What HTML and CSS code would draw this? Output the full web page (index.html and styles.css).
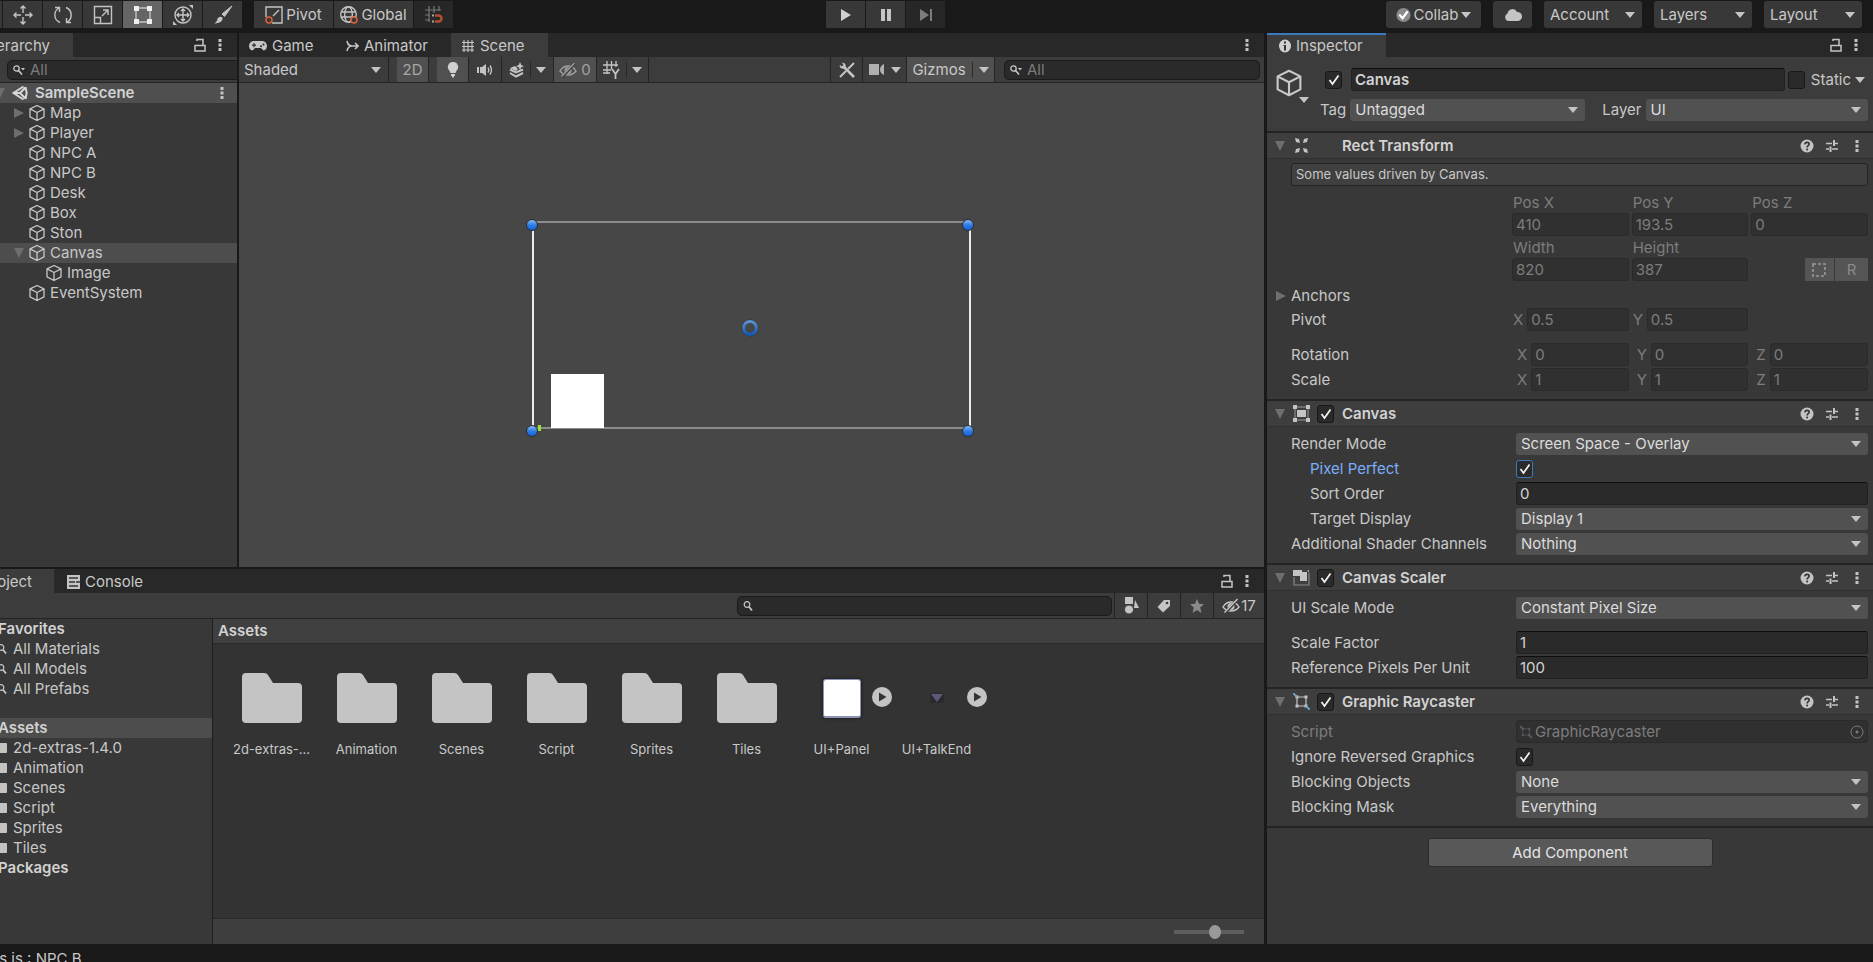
FILE: index.html
```html
<!DOCTYPE html>
<html lang="en">
<head>
    <meta charset="UTF-8">
    <meta name="viewport" content="width=device-width, initial-scale=1.0">
    <title>SampleScene - Editor</title>
    <link rel="stylesheet" href="styles.css">
</head>
<body>
    <!-- shared icons -->
    <svg class="sprite" aria-hidden="true">
        <symbol id="i-cube" viewBox="0 0 16 17"><path d="M8 1l7 3.400v8L8 16l-7-3.600v-8zM1 4.400L8 8l7-3.600M8 8v8" fill="none" stroke="currentColor" stroke-width="1.300" stroke-linejoin="round"/></symbol>
        <symbol id="i-right" viewBox="0 0 10 12"><path d="M0 1l10 5-10 5z" fill="currentColor"/></symbol>
        <symbol id="i-down" viewBox="0 0 10 10"><path d="M0 0h10L5 10z" fill="currentColor"/></symbol>
        <symbol id="i-caret" viewBox="0 0 10 6"><path d="M0 0h10L5 6z" fill="currentColor"/></symbol>
        <symbol id="i-dots" viewBox="0 0 4 14"><path d="M.5 1h3v3h-3zM.5 5.500h3v3h-3zM.5 10h3v3h-3z" fill="currentColor"/></symbol>
        <symbol id="i-lock" viewBox="0 0 12 14"><path d="M1 7.500h10V13H1zM3 3V1.500h6v6" fill="none" stroke="currentColor" stroke-width="1.500"/></symbol>
        <symbol id="i-search" viewBox="0 0 13 10"><circle cx="3.500" cy="3.500" r="2.700" fill="none" stroke="currentColor" stroke-width="1.300"/><path d="M5.500 5.500l3.500 4" stroke="currentColor" stroke-width="1.600"/><path d="M8 3h4l-2 2.500z" fill="currentColor"/></symbol>
        <symbol id="i-find" viewBox="0 0 10 12"><circle cx="4" cy="4.500" r="2.800" fill="none" stroke="currentColor" stroke-width="1.200"/><path d="M6 6.800l3 3.700" stroke="currentColor" stroke-width="1.800"/></symbol>
        <symbol id="i-folder" viewBox="0 0 60 50"><path d="M4 0h18q3 0 4 2l5 8h25q4 0 4 4v32q0 4-4 4H4q-4 0-4-4V4q0-4 4-4z" fill="currentColor"/></symbol>
        <symbol id="i-eye" viewBox="0 0 18 16"><path d="M1 9q3-5 8-5t8 5q-3 4-8 4T1 9z" fill="none" stroke="currentColor" stroke-width="1.400"/><circle cx="9" cy="8.500" r="3.500" fill="currentColor"/><path d="M3 15L16 1" stroke="#3c3c3c" stroke-width="3"/><path d="M2.500 14.500L15.500 1" stroke="currentColor" stroke-width="1.400"/></symbol>
        <symbol id="i-help" viewBox="0 0 14 14"><circle cx="7" cy="7" r="6.500" fill="currentColor"/><path d="M4.900 5.400q.2-2 2.200-2t2.100 1.700q0 1-1.200 1.700-.9.600-.9 1.700" fill="none" stroke="#333" stroke-width="1.600"/><circle cx="7.100" cy="10.500" r="1" fill="#333"/></symbol>
        <symbol id="i-preset" viewBox="0 0 14 14"><path d="M1 4.500h6M10 4.500h3M1 10h3M7 10h6" stroke="currentColor" stroke-width="1.300" fill="none"/><path d="M9 1v6M5.500 7.500V13" stroke="currentColor" stroke-width="2"/></symbol>
        <symbol id="i-play" viewBox="0 0 20 20"><circle cx="10" cy="10" r="10" fill="#c4c4c4"/><path d="M7 5.500l7.500 4.500L7 14.500z" fill="#333"/></symbol>
        <symbol id="i-grid" viewBox="0 0 14 14"><path d="M3 1v12M7 1v12M11 1v12M1 3.500h12M1 7.500h12M1 11h12" stroke="currentColor" stroke-width="1.100"/></symbol>
        <symbol id="i-ray" viewBox="0 0 17 17"><path d="M4 4h9v9H4z" fill="none" stroke="currentColor" stroke-width="1.200"/><path d="M2.500 2.500h3v3h-3zM11.500 2.500h3v3h-3zM2.500 11.500h3v3h-3zM11.500 11.500h3v3h-3z" fill="currentColor"/><path d="M0 0l4 4M13 13l4 4" stroke="#6ea8cc" stroke-width="1.800"/></symbol>
    </svg>

    <header class="topbar">
        <div class="group tools">
            <button class="tool edge" aria-label="Hand"></button>
            <button class="tool" aria-label="Move"><svg width="20" height="20" viewBox="0 0 20 20"><path d="M10 1v7M10 12v7M1 10h7M12 10h7M7.500 3.500L10 1l2.500 2.500M7.500 16.500L10 19l2.500-2.500M3.500 7.500L1 10l2.500 2.500M16.500 7.500L19 10l-2.500 2.500" class="line"/></svg></button>
            <button class="tool" aria-label="Rotate"><svg width="20" height="20" viewBox="0 0 20 20"><path d="M7 17.500A8 8 0 0 1 6 3M13 2.500A8 8 0 0 1 14 17M2 2.500h4.500V7M18 17.500h-4.500V13" class="line"/></svg></button>
            <button class="tool" aria-label="Scale"><svg width="20" height="20" viewBox="0 0 20 20"><path d="M1.500 1.500h17v17h-17zM1.500 12.500h6v6M9 11l6-6M10 5h5v5" class="line"/></svg></button>
            <button class="tool active" aria-label="Rect"><svg width="20" height="20" viewBox="0 0 20 20"><path d="M3 3h14v14H3z" class="line"/><path d="M1 1h5v5H1zM14 1h5v5h-5zM1 14h5v5H1zM14 14h5v5h-5z" fill="#eee"/></svg></button>
            <button class="tool" aria-label="Transform"><svg width="20" height="20" viewBox="0 0 20 20"><circle cx="10" cy="10" r="8" class="line"/><path d="M10 4v12M4 10h12M8 6l2-2 2 2M8 14l2 2 2-2M6 8l-2 2 2 2M14 8l2 2-2 2" class="line"/><path d="M16 0h4v4zM0 16v4h4z" fill="#c4c4c4"/></svg></button>
            <button class="tool" aria-label="Custom tool"><svg width="20" height="20" viewBox="0 0 20 20"><path d="M19 1L9 9l2.500 2.500z" fill="#c4c4c4" stroke="#c4c4c4" stroke-linejoin="round"/><path d="M9.500 12.500q1 5.500-8.500 6 3.500-2 3.500-5 2-3 5-1z" fill="#c4c4c4"/></svg></button>
        </div>
        <div class="group">
            <button class="tool wide"><svg width="18" height="18" viewBox="0 0 18 18"><path d="M7 17H17V1H1v10M8 10l6-6" class="line"/><circle cx="4" cy="14" r="3" fill="none" stroke="#d9623b" stroke-width="1.500"/></svg>Pivot</button>
            <button class="tool wide"><svg width="18" height="18" viewBox="0 0 18 18"><circle cx="8.500" cy="8.500" r="7.800" class="line"/><ellipse cx="8.500" cy="8.500" rx="3.800" ry="7.800" class="line"/><path d="M1 6h15M1 11h15" class="line"/><circle cx="14" cy="14" r="3" fill="#383838" stroke="#d9623b" stroke-width="1.500"/></svg>Global</button>
            <button class="tool off" aria-label="Snap"><svg width="20" height="20" viewBox="0 0 20 20"><path d="M5 1v16M10 1v7M15 1v5M1 5h16M1 10h5M1 15h5" stroke="#777" stroke-width="1.200" fill="none"/><path d="M11 10.500h3.500a3 3 0 0 1 0 6H11" fill="none" stroke="#b0502f" stroke-width="2.400"/><path d="M8 9.500h2v2H8zM8 15.500h2v2H8z" fill="#aaa"/></svg></button>
        </div>
        <span class="space-before"></span>
        <div class="group">
            <button class="tool" aria-label="Play"><svg width="12" height="14" viewBox="0 0 12 14"><path d="M1 1l10 6-10 6z" fill="#d0d0d0"/></svg></button>
            <button class="tool" aria-label="Pause"><svg width="12" height="14" viewBox="0 0 12 14"><path d="M1 1h4v12H1zM7 1h4v12H7z" fill="#c4c4c4"/></svg></button>
            <button class="tool off" aria-label="Step"><svg width="14" height="14" viewBox="0 0 14 14"><path d="M1 1l9 6-9 6zM11 1h2v12h-2z" fill="#7d7d7d"/></svg></button>
        </div>
        <span class="space-after"></span>
        <div class="account">
            <button class="tool collab"><svg width="15" height="16" viewBox="0 0 16 16"><circle cx="8" cy="8" r="7.500" fill="#8a8a8a"/><path d="M3.500 7.500l3.500 4L12.500 4" fill="none" stroke="#fff" stroke-width="2.400"/></svg>Collab<svg class="caret"><use href="#i-caret"/></svg></button>
            <button class="tool" aria-label="Services"><svg width="18" height="13" viewBox="0 0 18 13"><path d="M4 13a4 4 0 0 1-.5-7.500A5 5 0 0 1 13 4a4.500 4.500 0 0 1 1 9z" fill="#c4c4c4"/></svg></button>
            <select aria-label="Account"><option>Account</option></select>
            <select aria-label="Layers"><option>Layers</option></select>
            <select aria-label="Layout"><option>Layout</option></select>
        </div>
    </header>

    <main class="editor">
        <section class="hierarchy panel">
            <div class="tabs">
                <div class="tab current clipped">Hierarchy</div>
                <span class="tab-actions"><svg class="lock"><use href="#i-lock"/></svg><svg class="dots"><use href="#i-dots"/></svg></span>
            </div>
            <div class="bar search-row">
                <label class="search"><svg class="glass"><use href="#i-search"/></svg><input type="text" placeholder="All" aria-label="Search hierarchy"></label>
            </div>
            <ul class="tree">
                <li class="scene-row"><svg class="down"><use href="#i-down"/></svg><svg width="16" height="16" viewBox="0 0 16 16"><path d="M11.500 1.500L1.500 8l10 6.500M13.500 2l1.200 6-1.200 6M8 8l5.500-5.500M8 8l5.500 5.500M2 8h6" fill="none" stroke="#d6d6d6" stroke-width="2"/></svg><b>SampleScene</b><svg class="dots"><use href="#i-dots"/></svg></li>
                <li><svg class="right"><use href="#i-right"/></svg><svg class="cube"><use href="#i-cube"/></svg>Map</li>
                <li><svg class="right"><use href="#i-right"/></svg><svg class="cube"><use href="#i-cube"/></svg>Player</li>
                <li class="leaf"><svg class="cube"><use href="#i-cube"/></svg>NPC A</li>
                <li class="leaf"><svg class="cube"><use href="#i-cube"/></svg>NPC B</li>
                <li class="leaf"><svg class="cube"><use href="#i-cube"/></svg>Desk</li>
                <li class="leaf"><svg class="cube"><use href="#i-cube"/></svg>Box</li>
                <li class="leaf"><svg class="cube"><use href="#i-cube"/></svg>Ston</li>
                <li class="selected"><svg class="down"><use href="#i-down"/></svg><svg class="cube"><use href="#i-cube"/></svg>Canvas</li>
                <li class="child"><svg class="cube"><use href="#i-cube"/></svg>Image</li>
                <li class="leaf"><svg class="cube"><use href="#i-cube"/></svg>EventSystem</li>
            </ul>
        </section>

        <section class="scene panel">
            <div class="tabs">
                <div class="tab"><svg width="18" height="12" viewBox="0 0 18 12"><path d="M5 1h8a5 5 0 0 1 2.500 9.300Q14 11 12 8H6q-2 3-3.500 2.300A5 5 0 0 1 5 1z" fill="#c4c4c4"/><path d="M5 3.200v4M3 5.200h4" stroke="#282828" stroke-width="1.200"/><circle cx="12" cy="6.300" r="1" fill="#282828"/><circle cx="14.500" cy="4.500" r="1" fill="#282828"/></svg>Game</div>
                <div class="tab animator"><svg width="13" height="12" viewBox="0 0 13 12"><path d="M1 1q1 5 5 5h6M1 11q1-5 5-5M9 3l3 3-3 3" fill="none" stroke="#c4c4c4" stroke-width="1.600"/></svg>Animator</div>
                <div class="tab current"><svg width="14" height="14"><use href="#i-grid"/></svg>Scene</div>
                <span class="tab-actions"><svg class="dots"><use href="#i-dots"/></svg></span>
            </div>
            <div class="bar scene-bar">
                <select class="shading" aria-label="Draw mode"><option>Shaded</option></select>
                <button class="on two-d">2D</button>
                <button class="on light" aria-label="Lighting"><svg width="12" height="16" viewBox="0 0 12 16"><path d="M6 0a5 5 0 0 1 3.500 8.700L8.500 11h-5l-1-2.300A5 5 0 0 1 6 0zM4 12h4v2H7v1.500H5V14H4z" fill="#d0d0d0"/></svg></button>
                <button aria-label="Audio"><svg width="16" height="14" viewBox="0 0 16 14"><path d="M0 4h2v6H0zM3 4h2l4-3v12L5 10H3z" fill="#c4c4c4"/><path d="M11 4.500q1.500 2.500 0 5M13 2.500q3 4.500 0 9" class="line"/></svg></button>
                <button class="split" aria-label="Effects"><svg width="16" height="16" viewBox="0 0 16 16"><path d="M1 7.500l6 3 7-3M1 11l6 3.500 7-3.500" fill="none" stroke="#c4c4c4" stroke-width="2"/><path d="M11 0l1.300 3L15 4.200l-2.700 1L11 8 9.700 5.200 7 4.200 9.700 3z" fill="#c4c4c4"/><path d="M1 6l5-2 3 3-2 2z" fill="#c4c4c4"/></svg><i></i><svg class="caret"><use href="#i-caret"/></svg></button>
                <button class="on hidden-count"><svg class="eye"><use href="#i-eye"/></svg>0</button>
                <button class="split" aria-label="Grid axis"><svg width="18" height="18" viewBox="0 0 18 18"><path d="M4 0v13M8.500 0v8M13 0v6M0 4h15M0 9h8M0 12h7" stroke="#c4c4c4" stroke-width="1.300"/><path d="M9 8l3.500 5L16 8M12.500 12.500V18" fill="none" stroke="#c4c4c4" stroke-width="1.800"/></svg><i></i><svg class="caret"><use href="#i-caret"/></svg></button>
                <span class="spacer"></span>
                <button class="tools-btn" aria-label="Component tools"><svg width="16" height="16" viewBox="0 0 16 16"><path d="M4 4l11 11" stroke="#c4c4c4" stroke-width="2.600"/><path d="M3 .8A3 3 0 1 1 .8 3L3 4.500 4.500 3z" fill="#c4c4c4"/><path d="M15 1L9 7M7 9l-6 6" stroke="#c4c4c4" stroke-width="2"/></svg></button>
                <button class="camera" aria-label="Camera"><svg width="16" height="12" viewBox="0 0 16 12"><path d="M0 0h10v11H0zM15 0v11q-4-2-4-5.500T15 0z" fill="#b0b0b0"/></svg><svg class="caret"><use href="#i-caret"/></svg></button>
                <button class="on gizmos">Gizmos<i></i><svg class="caret"><use href="#i-caret"/></svg></button>
                <label class="search"><svg class="glass"><use href="#i-search"/></svg><input type="text" placeholder="All" aria-label="Search scene"></label>
            </div>
            <div class="viewport">
                <svg width="452" height="224" viewBox="0 0 452 224">
                    <defs>
                        <linearGradient id="dot" x1="0" y1="0" x2="0" y2="1"><stop offset="0" stop-color="#8fc0f5"/><stop offset=".5" stop-color="#2f7de8"/><stop offset="1" stop-color="#1260d8"/></linearGradient>
                        <linearGradient id="ring" x1="0" y1="0" x2="0" y2="1"><stop offset="0" stop-color="#5a8fd0"/><stop offset="1" stop-color="#1459b8"/></linearGradient>
                    </defs>
                    <path d="M6 9h440M6 215h440" stroke="#8c8c8c" stroke-width="2"/>
                    <path d="M7 10v204M444 10v204" stroke="#ececec" stroke-width="2"/>
                    <path d="M25 161h53v54H25z" fill="#fff"/>
                    <path d="M12 212h3v6h-3z" fill="#9ae234"/>
                    <g fill="url(#dot)" stroke="#2b2b2b" stroke-width="1">
                        <circle cx="6" cy="12" r="5.500"/><circle cx="442" cy="12" r="5.500"/><circle cx="6" cy="218" r="5.500"/><circle cx="442" cy="218" r="5.500"/>
                    </g>
                    <circle cx="224" cy="115" r="7.500" fill="none" stroke="#333" stroke-width="2"/>
                    <circle cx="224" cy="115" r="6.500" fill="none" stroke="url(#ring)" stroke-width="3"/>
                </svg>
            </div>
        </section>

        <section class="project panel">
            <div class="tabs">
                <div class="tab current clipped">Project</div>
                <div class="tab console"><svg width="13" height="14" viewBox="0 0 13 14"><path d="M0 0h13v14H0z" fill="#c4c4c4"/><path d="M2 3h9M2 7h6M9 7h4M2 11h9" stroke="#333" stroke-width="1.400"/></svg>Console</div>
                <span class="tab-actions"><svg class="lock"><use href="#i-lock"/></svg><svg class="dots"><use href="#i-dots"/></svg></span>
            </div>
            <div class="bar project-bar">
                <label class="search"><svg class="find"><use href="#i-find"/></svg><input type="text" aria-label="Search assets"></label>
                <button aria-label="By type"><svg width="15" height="17" viewBox="0 0 15 17"><path d="M1 0h8v7H1zM11 3l4 8h-5z" fill="#c4c4c4"/><circle cx="5" cy="12.500" r="4.500" fill="#c4c4c4" stroke="#3c3c3c" stroke-width="1"/></svg></button>
                <button aria-label="By label"><svg width="14" height="14" viewBox="0 0 14 14"><path d="M7 1h6v6l-7 6.500L.5 8z" fill="#c4c4c4"/><circle cx="10" cy="4" r="1.300" fill="#3c3c3c"/></svg></button>
                <button aria-label="Save search"><svg width="14" height="14" viewBox="0 0 14 14"><path d="M7 0l2 4.800 5 .4-3.800 3.300L11.400 14 7 11l-4.400 3 1.200-5.500L0 5.200l5-.4z" fill="#8a8a8a"/></svg></button>
                <button class="packages"><svg class="eye"><use href="#i-eye"/></svg>17</button>
            </div>
            <div class="project-body">
                <ul class="folders">
                    <li class="root">Favorites</li>
                    <li><svg class="find"><use href="#i-find"/></svg>All Materials</li>
                    <li><svg class="find"><use href="#i-find"/></svg>All Models</li>
                    <li><svg class="find"><use href="#i-find"/></svg>All Prefabs</li>
                    <li class="root selected">Assets</li>
                    <li><span class="mini"></span>2d-extras-1.4.0</li>
                    <li><span class="mini"></span>Animation</li>
                    <li><span class="mini"></span>Scenes</li>
                    <li><span class="mini"></span>Script</li>
                    <li><span class="mini"></span>Sprites</li>
                    <li><span class="mini"></span>Tiles</li>
                    <li class="root">Packages</li>
                </ul>
                <div class="assets">
                    <div class="crumb">Assets</div>
                    <div class="asset-grid">
                        <div class="asset"><div class="thumb"><svg class="folder"><use href="#i-folder"/></svg></div>2d-extras-...</div>
                        <div class="asset"><div class="thumb"><svg class="folder"><use href="#i-folder"/></svg></div>Animation</div>
                        <div class="asset"><div class="thumb"><svg class="folder"><use href="#i-folder"/></svg></div>Scenes</div>
                        <div class="asset"><div class="thumb"><svg class="folder"><use href="#i-folder"/></svg></div>Script</div>
                        <div class="asset"><div class="thumb"><svg class="folder"><use href="#i-folder"/></svg></div>Sprites</div>
                        <div class="asset"><div class="thumb"><svg class="folder"><use href="#i-folder"/></svg></div>Tiles</div>
                        <div class="asset"><div class="thumb"><span class="sprite-panel"></span><svg class="expand"><use href="#i-play"/></svg></div>UI+Panel</div>
                        <div class="asset"><div class="thumb"><svg width="14" height="10" viewBox="0 0 14 10"><path d="M0 0h14v10H0z" fill="#2a2a2c"/><path d="M1 1h12L7 9z" fill="#5b5878"/></svg><svg class="expand"><use href="#i-play"/></svg></div>UI+TalkEnd</div>
                    </div>
                    <div class="asset-foot"><input type="range" min="0" max="100" value="60" aria-label="Icon size"></div>
                </div>
            </div>
        </section>

        <section class="inspector panel">
            <div class="tabs">
                <div class="tab current focused"><svg width="12" height="14" viewBox="0 0 12 14"><ellipse cx="6" cy="7" rx="6" ry="6.500" fill="#d0d0d0"/><path d="M5 2.500h2v2H5zM4.500 6H7v5.500H5V7h-.5z" fill="#333"/></svg>Inspector</div>
                <span class="tab-actions"><svg class="lock"><use href="#i-lock"/></svg><svg class="dots"><use href="#i-dots"/></svg></span>
            </div>

            <div class="object-head">
                <span class="object-icon"><svg width="26" height="28"><use href="#i-cube"/></svg><svg class="caret"><use href="#i-caret"/></svg></span>
                <div class="object-lines">
                    <div class="object-line">
                        <input type="checkbox" checked aria-label="Active">
                        <input type="text" class="field name" value="Canvas" aria-label="Name">
                        <input type="checkbox" id="static">
                        <label for="static">Static</label>
                        <svg class="caret"><use href="#i-caret"/></svg>
                    </div>
                    <div class="object-line tag-line">
                        <label for="tag">Tag</label>
                        <select id="tag"><option>Untagged</option></select>
                        <label for="layer" class="layer-label">Layer</label>
                        <select id="layer"><option>UI</option></select>
                    </div>
                </div>
            </div>

            <div class="component">
                <div class="component-head">
                    <svg class="down"><use href="#i-down"/></svg>
                    <svg class="kind" viewBox="0 0 17 17"><path d="M2 1l4 1 1 4-4-1zM15 1l-4 1-1 4 4-1zM2 16l4-1 1-4-4 1zM15 16l-4-1-1-4 4 1z" fill="#c4c4c4"/></svg>
                    <span class="no-check"></span>
                    <h2>Rect Transform</h2>
                    <svg class="act"><use href="#i-help"/></svg><svg class="act preset"><use href="#i-preset"/></svg><svg class="dots"><use href="#i-dots"/></svg>
                </div>
                <div class="component-body">
                    <p class="note">Some values driven by Canvas.</p>
                    <div class="rect-grid">
                        <label for="px">Pos X</label><label for="py">Pos Y</label><label for="pz">Pos Z</label>
                        <input class="field" id="px" value="410" disabled><input class="field" id="py" value="193.5" disabled><input class="field" id="pz" value="0" disabled>
                        <label for="w">Width</label><label for="h">Height</label><span></span>
                        <input class="field" id="w" value="820" disabled><input class="field" id="h" value="387" disabled>
                        <span class="modes"><button disabled aria-label="Blueprint mode"><svg width="14" height="14" viewBox="0 0 14 14"><path d="M1 1h12v12H1z" fill="none" stroke="#999" stroke-width="1.600" stroke-dasharray="3 2"/></svg></button><button disabled>R</button></span>
                    </div>
                    <div class="row foldout"><svg class="right"><use href="#i-right"/></svg>Anchors</div>
                    <div class="row vector pivot"><span>Pivot</span>
                        <div class="axes"><label>X<input class="field" value="0.5" disabled></label><label>Y<input class="field" value="0.5" disabled></label></div></div>
                    <div class="row vector"><span>Rotation</span>
                        <div class="axes inset"><label>X<input class="field" value="0" disabled></label><label>Y<input class="field" value="0" disabled></label><label>Z<input class="field" value="0" disabled></label></div></div>
                    <div class="row vector"><span>Scale</span>
                        <div class="axes inset"><label>X<input class="field" value="1" disabled></label><label>Y<input class="field" value="1" disabled></label><label>Z<input class="field" value="1" disabled></label></div></div>
                </div>
            </div>

            <div class="component">
                <div class="component-head">
                    <svg class="down"><use href="#i-down"/></svg>
                    <svg class="kind" viewBox="0 0 17 17"><path d="M2 2h13v13H2z" fill="none" stroke="#999" stroke-width="1"/><path d="M4 5h9v7H4zM0 0h4v4H0zM13 0h4v4h-4zM0 13h4v4H0zM13 13h4v4h-4z" fill="#c4c4c4"/></svg>
                    <input type="checkbox" checked aria-label="Enable Canvas">
                    <h2>Canvas</h2>
                    <svg class="act"><use href="#i-help"/></svg><svg class="act preset"><use href="#i-preset"/></svg><svg class="dots"><use href="#i-dots"/></svg>
                </div>
                <div class="component-body">
                    <div class="row"><label for="render">Render Mode</label><select id="render"><option>Screen Space - Overlay</option></select></div>
                    <div class="row sub focus"><label for="perfect">Pixel Perfect</label><input type="checkbox" id="perfect" checked></div>
                    <div class="row sub"><label for="order">Sort Order</label><input class="field" id="order" value="0"></div>
                    <div class="row sub"><label for="display">Target Display</label><select id="display"><option>Display 1</option></select></div>
                    <div class="row"><label for="shader">Additional Shader Channels</label><select id="shader"><option>Nothing</option></select></div>
                </div>
            </div>

            <div class="component">
                <div class="component-head">
                    <svg class="down"><use href="#i-down"/></svg>
                    <svg class="kind" viewBox="0 0 17 17"><path d="M1 8v8h15V4" fill="none" stroke="#888" stroke-width="1.200"/><path d="M0 1h9v2h5v9H7V7H0zM14 2l2-1v2z" fill="#c4c4c4"/></svg>
                    <input type="checkbox" checked aria-label="Enable Canvas Scaler">
                    <h2>Canvas Scaler</h2>
                    <svg class="act"><use href="#i-help"/></svg><svg class="act preset"><use href="#i-preset"/></svg><svg class="dots"><use href="#i-dots"/></svg>
                </div>
                <div class="component-body">
                    <div class="row spaced"><label for="scale-mode">UI Scale Mode</label><select id="scale-mode"><option>Constant Pixel Size</option></select></div>
                    <div class="row"><label for="factor">Scale Factor</label><input class="field" id="factor" value="1"></div>
                    <div class="row"><label for="ppu">Reference Pixels Per Unit</label><input class="field" id="ppu" value="100"></div>
                </div>
            </div>

            <div class="component">
                <div class="component-head">
                    <svg class="down"><use href="#i-down"/></svg>
                    <svg class="kind"><use href="#i-ray"/></svg>
                    <input type="checkbox" checked aria-label="Enable Graphic Raycaster">
                    <h2>Graphic Raycaster</h2>
                    <svg class="act"><use href="#i-help"/></svg><svg class="act preset"><use href="#i-preset"/></svg><svg class="dots"><use href="#i-dots"/></svg>
                </div>
                <div class="component-body">
                    <div class="row script"><label for="script">Script</label>
                        <div class="field object-field"><svg width="12" height="14"><use href="#i-ray"/></svg><input id="script" value="GraphicRaycaster" disabled><svg width="14" height="14" viewBox="0 0 14 14"><circle cx="7" cy="7" r="6" fill="none" stroke="currentColor"/><circle cx="7" cy="7" r="1.500" fill="currentColor"/></svg></div></div>
                    <div class="row"><label for="ignore">Ignore Reversed Graphics</label><input type="checkbox" id="ignore" checked></div>
                    <div class="row"><label for="blocking">Blocking Objects</label><select id="blocking"><option>None</option></select></div>
                    <div class="row"><label for="mask">Blocking Mask</label><select id="mask"><option>Everything</option></select></div>
                </div>
            </div>

            <div class="add-area"><button class="add">Add Component</button></div>
        </section>
    </main>

    <footer class="status"><span>This is : NPC B</span></footer>
</body>
</html>
```
FILE: styles.css
```css
* {
    box-sizing: border-box;
}
body {
    margin: 0;
    height: 100vh;
    display: flex;
    flex-direction: column;
    overflow: hidden;
    background: #191919;
    color: #c8c8c8;
    font-family: Inter, "Liberation Sans", sans-serif;
    font-size: 15px;
    line-height: 20px;
}
button, input, select {
    margin: 0;
    padding: 0;
    border: none;
    border-radius: 0;
    font: inherit;
    color: inherit;
    outline: none;
}
svg {
    display: block;
    flex: none;
}
ul {
    list-style: none;
    margin: 0;
    padding: 0;
}
.sprite {
    position: absolute;
    width: 0;
    height: 0;
}
.line {
    fill: none;
    stroke: #c4c4c4;
    stroke-width: 1.4;
}

/* icon sizes */
.caret { width: 10px; height: 6px; color: #c4c4c4; }
.dots { width: 4px; height: 14px; color: #c4c4c4; }
.lock { width: 12px; height: 14px; color: #c4c4c4; }
.cube { width: 16px; height: 18px; }
.right { width: 10px; height: 12px; color: #6e6e6e; }
.down { width: 10px; height: 10px; color: #6e6e6e; }
.glass { width: 13px; height: 10px; }
.find { width: 10px; height: 12px; }
.eye { width: 18px; height: 16px; }
.kind { width: 17px; height: 17px; color: #c4c4c4; }
.act { width: 14px; height: 14px; color: #c4c4c4; }

/* top toolbar */
.topbar {
    display: flex;
    flex: none;
    height: 33px;
    padding: 1px 11px 0 0;
}
.group {
    display: flex;
    gap: 1px;
}
.tools {
    margin-right: 12px;
}
.tool {
    display: flex;
    flex: none;
    align-items: center;
    justify-content: center;
    gap: 3px;
    width: 39px;
    height: 27px;
    background: #383838;
}
.tool.edge { width: 2px; }
.tool.active { background: #656565; }
.tool.off { background: #272727; }
.tool.wide { width: 79px; }
.space-before { flex: 11; }
.space-after { flex: 13; }
.account {
    display: flex;
    gap: 12px;
}
.account .tool, .account select {
    border-radius: 3px;
}
.account .collab { width: 95px; }
.account select {
    width: 98px;
    height: 27px;
    padding-left: 6px;
    background-color: #383838;
    color: #c8c8c8;
}

/* drop-downs, text boxes, tick boxes */
select {
    appearance: none;
    height: 22px;
    min-width: 0;
    padding: 0 20px 0 5px;
    border-radius: 3px;
    color: #dcdcdc;
    background: #515151 url("data:image/svg+xml,%3Csvg xmlns='http://www.w3.org/2000/svg' width='10' height='6'%3E%3Cpath d='M0 0h10L5 6z' fill='%23c4c4c4'/%3E%3C/svg%3E") no-repeat right 7px center;
}
.field {
    min-width: 0;
    width: 100%;
    height: 23px;
    padding: 0 3px;
    border: 1px solid #212121;
    border-top-color: #0d0d0d;
    border-radius: 3px;
    background: #2a2a2a;
    color: #d2d2d2;
}
.field:disabled, .object-field {
    background: #303030;
    border-color: #2a2a2a;
    color: #7d7d7d;
}
input[type="checkbox"] {
    appearance: none;
    flex: none;
    width: 17px;
    height: 18px;
    border: 1px solid #181818;
    border-radius: 3px;
    background: #2a2a2a;
}
input[type="checkbox"]:checked {
    background: #2a2a2a url("data:image/svg+xml,%3Csvg xmlns='http://www.w3.org/2000/svg' width='12' height='12'%3E%3Cpath d='M1.500 6l3 4L10.500 1.500' fill='none' stroke='%23f0f0f0' stroke-width='1.800'/%3E%3C/svg%3E") no-repeat center;
}
.search {
    display: flex;
    align-items: center;
    gap: 4px;
    height: 20px;
    padding: 0 5px;
    border: 1px solid #1a1a1a;
    border-radius: 5px;
    background: #2a2a2a;
}
.search input {
    flex: 1;
    min-width: 0;
    background: none;
}
.search input::placeholder {
    color: #7a7a7a;
}

/* panels */
.editor {
    flex: 1;
    min-height: 0;
    display: grid;
    grid-template-columns: 237px minmax(0, 1fr) 607px;
    grid-template-rows: minmax(0, 1fr) 375px;
    gap: 2px;
}
.panel {
    display: flex;
    flex-direction: column;
    min-width: 0;
    background: #383838;
    overflow: hidden;
}
.project {
    grid-column: 1 / 3;
    grid-row: 2;
}
.inspector {
    grid-column: 3;
    grid-row: 1 / 3;
    margin-left: 1px;
}
.tabs {
    display: flex;
    flex: none;
    height: 24px;
    background: #282828;
}
.tab {
    display: flex;
    align-items: center;
    gap: 5px;
    padding: 1px 10px 0;
}
.tab.current {
    background: #3c3c3c;
}
.tab.clipped {
    justify-content: flex-end;
    width: 73px;
    padding-right: 23px;
    overflow: hidden;
}
.project .tab.clipped {
    width: 54px;
    padding-right: 22px;
}
.tab-actions {
    display: flex;
    align-items: center;
    gap: 12px;
    margin-left: auto;
    padding-right: 15px;
}
.bar {
    display: flex;
    flex: none;
    align-items: center;
    height: 26px;
    background: #3c3c3c;
    border-bottom: 1px solid #242424;
}

/* hierarchy */
.search-row {
    padding: 0 5px 0 7px;
}
.search-row .search {
    flex: 1;
}
.tree li {
    display: flex;
    align-items: center;
    gap: 5px;
    height: 20px;
    padding-left: 14px;
}
.tree .leaf { padding-left: 29px; }
.tree .child { padding-left: 46px; }
.tree .selected { background: #4d4d4d; }
.tree .scene-row {
    padding: 0 13px 0 0;
    margin-left: -5px;
    gap: 7px;
    background: #4f4f4f;
}
.scene-row .dots { margin-left: auto; }
b, h2, .root, .crumb {
    font-weight: 600;
    color: #d2d2d2;
}

/* scene view */
.scene .tab { width: 97px; }
.scene .tab.animator { width: 115px; }
.scene-bar button, .project-bar button {
    display: flex;
    flex: none;
    align-items: center;
    justify-content: center;
    gap: 4px;
    width: 33px;
    height: 25px;
    background: none;
    border-right: 1px solid #242424;
}
.scene-bar select {
    width: 150px;
    height: 25px;
    border-radius: 0;
    border-right: 1px solid #242424;
    background-color: #3c3c3c;
    color: #c8c8c8;
}
.scene-bar button.on { background: #505050; }
.scene-bar button.two-d {
    width: 32px;
    margin: 0 8px;
    color: #a8a8a8;
}
.scene-bar button.light { width: 32px; }
.scene-bar button.split {
    width: 52px;
    gap: 5px;
}
.scene-bar i {
    width: 1px;
    height: 16px;
    background: #2a2a2a;
}
.scene-bar button.hidden-count { width: 43px; color: #a0a0a0; }
.scene-bar button.tools-btn { border-left: 1px solid #242424; }
.scene-bar button.camera { width: 44px; gap: 6px; }
.scene-bar button.gizmos { width: 88px; gap: 6px; }
.scene-bar .search {
    width: 256px;
    margin: 0 4px 0 9px;
}
.spacer { flex: 1; }
.viewport {
    flex: 1;
    display: flex;
    align-items: center;
    justify-content: center;
    background: #474747;
}

/* project */
.console { padding-left: 13px; }
.project-bar { justify-content: flex-end; }
.project-bar .search {
    width: 375px;
    margin-right: 2px;
}
.project-bar button {
    border-right: none;
    border-left: 1px solid #242424;
}
.project-bar button.packages {
    width: 51px;
    gap: 1px;
}
.project-body {
    flex: 1;
    display: flex;
    min-height: 0;
}
.folders {
    width: 213px;
    border-right: 1px solid #1e1e1e;
}
.folders li {
    display: flex;
    align-items: center;
    gap: 6px;
    height: 20px;
    margin-left: -3px;
}
.folders .root { padding-left: 1px; }
.folders .selected {
    margin-top: 19px;
    background: #4d4d4d;
}
.mini {
    width: 10px;
    height: 10px;
    border-radius: 1px;
    background: #c4c4c4;
}
.assets {
    flex: 1;
    display: flex;
    flex-direction: column;
    min-width: 0;
    background: #333;
}
.crumb {
    height: 25px;
    padding: 2px 5px;
    background: #404040;
    border-bottom: 1px solid #2a2a2a;
}
.asset-grid {
    flex: 1;
    display: flex;
    padding: 29px 0 0 11px;
}
.asset {
    width: 95px;
    text-align: center;
    font-size: 13px;
}
.thumb {
    display: flex;
    align-items: center;
    justify-content: center;
    position: relative;
    height: 50px;
    margin-bottom: 16px;
}
.folder {
    width: 60px;
    height: 50px;
    color: #c4c4c4;
}
.sprite-panel {
    width: 38px;
    height: 39px;
    border: 1px solid #8c93b4;
    border-bottom-width: 2px;
    border-radius: 3px;
    background: #fff;
    box-shadow: 0 0 3px 1px #222;
}
.expand {
    position: absolute;
    right: -3px;
    top: 14px;
    width: 20px;
    height: 20px;
}
.asset-foot {
    display: flex;
    align-items: center;
    justify-content: flex-end;
    height: 26px;
    padding-right: 20px;
    background: #3e3e3e;
    border-top: 1px solid #2a2a2a;
}
input[type="range"] {
    appearance: none;
    width: 70px;
    height: 14px;
    background: linear-gradient(#5e5e5e, #5e5e5e) no-repeat center / 100% 4px;
}
input[type="range"]::-webkit-slider-thumb {
    appearance: none;
    width: 12px;
    height: 14px;
    border-radius: 50%;
    background: #999;
}

/* inspector */
.inspector .tab {
    width: 119px;
    padding: 0 12px;
}
.inspector .tab.focused { border-top: 2px solid #3a79bb; }
.object-head {
    display: flex;
    padding: 11px 5px 10px 9px;
    background: #3c3c3c;
}
.object-icon {
    width: 43px;
    padding-top: 1px;
}
.object-icon .caret { margin-left: 23px; }
.object-lines { flex: 1; }
.object-line {
    display: flex;
    align-items: center;
    gap: 6px;
}
.object-line > input:first-child { margin: 0 3px 0 6px; }
.object-line .name {
    flex: 1;
    margin-right: -3px;
    font-weight: 600;
}
.object-line .caret { margin: 0 3px 0 -2px; }
.tag-line {
    gap: 4px;
    margin-top: 8px;
    padding-left: 1px;
}
.tag-line select { flex: 220; }
.tag-line select:first-of-type { flex: 234; }
.layer-label { margin-left: 13px; }
.component {
    border-top: 2px solid #242424;
}
.component-head {
    display: flex;
    align-items: center;
    height: 26px;
    padding: 0 14px 0 8px;
    background: #3e3e3e;
    border-bottom: 1px solid #303030;
}
.component-head .kind { margin: 0 7px 0 8px; }
.component-head h2 {
    flex: 1;
    margin: 0 0 0 8px;
    font-size: 15px;
}
.no-check { width: 17px; }
.act { margin-right: 11px; }
.act.preset { margin-right: 16px; }
.component-body {
    padding: 4px 5px 7px 24px;
}
.row {
    display: grid;
    grid-template-columns: 225px minmax(0, 1fr);
    align-items: center;
    height: 25px;
}
.row.spaced { margin-bottom: 10px; }
.row.sub label { padding-left: 19px; }
.row.focus { color: #7baefa; }
.row.focus input { border-color: #3a79bb; }
.script { color: #7d7d7d; }
.object-field {
    display: flex;
    align-items: center;
    gap: 3px;
}
.object-field input {
    flex: 1;
    min-width: 0;
    background: none;
    color: #7d7d7d;
}
.object-field > svg:first-child { opacity: .5; }
.note {
    height: 23px;
    margin: 0;
    padding: 0 4px;
    border: 1px solid #242424;
    border-radius: 3px;
    background: #404040;
    font-size: 13px;
}
.rect-grid {
    display: grid;
    grid-template-columns: repeat(3, minmax(0, 1fr));
    column-gap: 3px;
    margin: 5px 0 3px 221px;
    color: #7d7d7d;
}
.rect-grid label {
    height: 22px;
    padding: 2px 1px 0;
}
.modes {
    display: flex;
    justify-content: flex-end;
    gap: 1px;
}
.modes button {
    display: flex;
    align-items: center;
    justify-content: center;
    width: 33px;
    height: 23px;
    background: #555;
    color: #8a8a8a;
}
.modes button:first-child { width: 29px; }
.row.foldout {
    display: flex;
    gap: 5px;
    height: 23px;
    margin-left: -15px;
}
.vector { grid-template-columns: 221px minmax(0, 1fr); }
.pivot { margin-bottom: 10px; }
.axes {
    display: grid;
    grid-template-columns: repeat(3, minmax(0, 1fr));
    column-gap: 3px;
    color: #7d7d7d;
}
.axes label {
    display: flex;
    align-items: center;
    gap: 4px;
    padding-left: 1px;
}
.axes.inset label { padding-left: 5px; }
.add-area {
    padding: 10px 0;
    text-align: center;
    border-top: 2px solid #242424;
}
.add {
    width: 285px;
    height: 29px;
    border: 1px solid #2c2c2c;
    border-radius: 3px;
    background: #585858;
    color: #e4e4e4;
}

/* status line, cut by the window edge */
.status {
    flex: none;
    height: 18px;
    padding-top: 5px;
    overflow: hidden;
}
.status span {
    display: block;
    margin-left: -23px;
}
```
